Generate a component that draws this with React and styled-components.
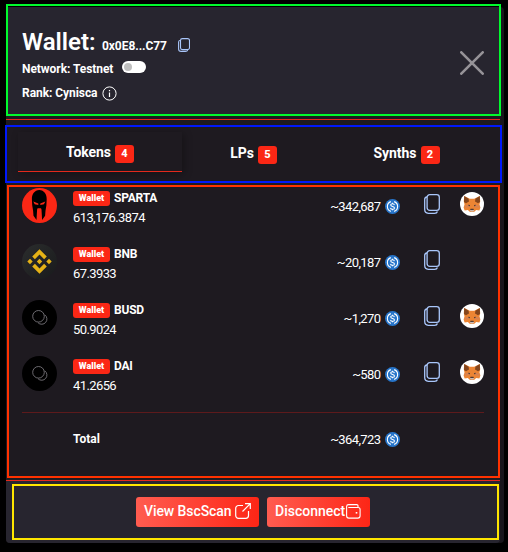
import React from 'react';
import styled, { createGlobalStyle } from 'styled-components';

const GlobalStyle = createGlobalStyle`
  body { margin: 0; background: #000; font-family: Roboto, sans-serif; color: #fff; }
  * { box-sizing: border-box; }
`;

const Page = styled.main`
  width: 508px;
  height: 552px;
  padding: 7px 4px 9px 6px;
  overflow: hidden;
`;

const Dialog = styled.div`
  display: flex;
  flex-direction: column;
  height: 536px;
  padding-right: 4px;
  background: #18151b;
  border-radius: 4px;
`;

const Outline = styled.div`
  position: absolute;
  inset: ${(p) => p.$inset};
  border: 2px solid ${(p) => p.$color};
  pointer-events: none;
`;

const Header = styled.header`
  position: relative;
  display: flex;
  justify-content: space-between;
  height: 113px;
  padding: 20px 16px 0;
  background: #27252f;
  border-bottom: 1px solid #e3291c;
  box-shadow: inset 0 -3px 0 #1e1a20;
`;

const TitleRow = styled.div`
  display: flex;
  align-items: flex-start;
  height: 30px;
  line-height: 30px;
  svg { margin-top: 11px; }
`;

const Title = styled.h1`
  margin: 0;
  width: 80px;
  font-size: 24px;
  font-weight: 600;
  line-height: 30px;
`;

const Address = styled.span`
  width: 76px;
  padding-top: 4px;
  font-size: 12px;
  font-weight: 700;
  letter-spacing: -0.06px;
`;

const InfoRow = styled.div`
  display: flex;
  align-items: center;
  gap: ${(p) => p.$gap};
  height: 24px;
  font-size: 12px;
  font-weight: 700;
  letter-spacing: -0.06px;
  white-space: nowrap;
`;

const Switch = styled.span`
  display: flex;
  align-items: center;
  width: 24px;
  height: 12px;
  margin-bottom: 4px;
  padding-left: 2px;
  border-radius: 6px;
  background: #fff;
`;

const Knob = styled.span`
  width: 8px;
  height: 8px;
  border-radius: 50%;
  background: #bfbfbf;
`;

const CloseButton = styled.button`
  width: 24px;
  height: 24px;
  margin-top: 24px;
  padding: 0;
  border: 0;
  background: none;
  svg { display: block; }
`;

const TabBar = styled.nav`
  position: relative;
  display: flex;
  height: 65px;
  padding: 12px 12px 0;
  background: #1e1a20;
`;

const Tab = styled.button`
  display: flex;
  align-items: flex-start;
  justify-content: center;
  gap: 4px;
  width: ${(p) => p.$width};
  height: 40px;
  padding: ${(p) => (p.$active ? '13px' : '14px')} 0 0;
  border: 0;
  border-bottom: 1px solid ${(p) => (p.$active ? '#e3291c' : 'transparent')};
  background: none;
  box-shadow: ${(p) => (p.$active ? '2px 2px 8px rgba(0, 0, 0, 0.3)' : 'none')};
  color: #fff;
  font: 700 14px/15px Roboto, sans-serif;
  letter-spacing: -0.05px;
`;

const Count = styled.span`
  width: 19px;
  height: 18px;
  border-radius: 3px;
  background: #fb2715;
  font-size: 11px;
  font-weight: 800;
  line-height: 17px;
  text-align: center;
`;

const Body = styled.section`
  position: relative;
  height: 295px;
  padding: 3px 16px 0;
  background: #1e1a20;
`;

const AssetRow = styled.div`
  display: grid;
  grid-template-columns: 35px 1fr 100px 40px 44px;
  height: 56px;
`;

const Avatar = styled.svg`
  display: block;
  width: 35px;
  height: 35px;
`;

const AssetText = styled.div`
  padding: 3px 0 0 16px;
  font-size: 13px;
  letter-spacing: -0.6px;
`;

const AssetName = styled.div`
  display: flex;
  gap: 4px;
  height: 15px;
  font-size: 12px;
  font-weight: 700;
  line-height: 14px;
  letter-spacing: -0.2px;
`;

const WalletTag = styled.span`
  width: 37px;
  height: 15px;
  border-radius: 3px;
  background: #fb2715;
  font-size: 9px;
  font-weight: 900;
  line-height: 15px;
  text-align: center;
  letter-spacing: 0;
`;

const Amount = styled.div`
  margin-top: 3px;
  line-height: 17px;
`;

const Value = styled.div`
  display: flex;
  align-items: center;
  justify-content: flex-end;
  gap: 4.6px;
  height: 15px;
  margin-top: ${(p) => p.$top};
  font-size: 13px;
  letter-spacing: -0.62px;
`;

const CopySlot = styled.div`
  padding: 6px 0 0 24px;
`;

const FoxSlot = styled.div`
  padding: 4px 0 0 20px;
`;

const Divider = styled.hr`
  height: 1px;
  margin: 0 0 18px;
  border: 0;
  background: #5d1a1c;
`;

const TotalRow = styled.div`
  display: grid;
  grid-template-columns: 51px 1fr 100px 84px;
  font-size: 12px;
  font-weight: 700;
  line-height: 17px;
  letter-spacing: 0;
`;

const TotalValue = styled(Value)`
  font-weight: 400;
`;

const Footer = styled.footer`
  position: relative;
  display: flex;
  justify-content: center;
  gap: 8px;
  height: 63px;
  padding-top: 16px;
  border-top: 1px solid #e3291c;
  border-radius: 0 0 4px 4px;
  background: #27252f;
`;

const Button = styled.button`
  display: flex;
  align-items: center;
  gap: ${(p) => p.$gap};
  width: ${(p) => p.$width};
  height: 30px;
  padding: 0 0 2px 8px;
  border: 0;
  border-radius: 3px;
  background: linear-gradient(90deg, #ff5c50, #fd2616);
  color: #fff;
  font: 500 14px Roboto, sans-serif;
  letter-spacing: ${(p) => p.$tracking};
  white-space: nowrap;
  svg { flex: none; }
`;

const CopyIcon = () => (
  <svg width="16" height="20" viewBox="0 0 16 20" fill="none" stroke="#a9c6fa" strokeWidth="1.3">
    <rect x="3.1" y="0.7" width="12.2" height="15.6" rx="2.6" />
    <path d="M3 3C1.4 3.2.7 4 .7 5.4v10.2c0 2.4 1.2 3.7 3.6 3.7h6.2c1.6 0 2.6-.6 2.9-1.8" />
  </svg>
);

const SmallCopyIcon = () => (
  <svg width="12" height="14" viewBox="0 0 12 14" fill="none" stroke="#a9c6fa" strokeWidth="1.1">
    <rect x="2.5" y="0.6" width="9" height="11" rx="1.9" />
    <path d="M2.5 2.2C1.2 2.3.6 2.9.6 4v6.9c0 1.7.9 2.5 2.5 2.5h4.4c1.2 0 1.9-.4 2.2-1.3" />
  </svg>
);

const UsdIcon = () => (
  <svg width="15" height="15" viewBox="0 0 32 32">
    <circle cx="16" cy="16" r="16" fill="#2775ca" />
    <g fill="none" stroke="#fff" strokeWidth="2.3">
      <path d="M12.5 5.6a11 11 0 0 0 0 20.8M19.5 5.6a11 11 0 0 1 0 20.8" />
      <path d="M20 13c-.3-2-1.7-2.8-4-2.8-2.3 0-3.8 1-3.8 2.8 0 4 8 1.9 8 6 0 1.9-1.7 3-4.2 3-2.5 0-4-1-4.2-3M16 7.8v2.5M16 21.7v2.5" />
    </g>
  </svg>
);

const FoxIcon = () => (
  <svg width="24" height="24" viewBox="0 0 24 24">
    <circle cx="12" cy="12" r="12" fill="#fff" />
    <path fill="#ec8534" d="M4.2 4 9.8 6.8h4.4L19.800 4l.4 5.200-.7 3.200.9 3.100-1 3.100-3.200-.6-2.200 2h-4l-2.200-2-3.200.6-1-3.100.9-3.100-.7-3.200z" />
    <path fill="#84451c" d="M4.200 4 8.600 6.800 9 9.600l-3 1.600-2-1.200zM19.800 4l-4.400 2.800-.4 2.800 3 1.600 2-1.200z" />
    <path fill="#d9824f" d="m4.800 13.500 4-.9 1 2.600-5.500.6zM19.200 13.500l-4-.9-1 2.600 5.500.6z" />
    <path fill="#4a3a36" d="m8.200 12.800 1.700.3v1.100l-1.200-.3zM15.800 12.800l-1.700.3v1.100l1.200-.3zM10.500 16.800h3l.3 1.300h-3.600z" />
    <path fill="#cdbbb0" d="M9.900 18.100h4.200l-.5 1.500h-3.200z" />
  </svg>
);

const SpartaAvatar = () => (
  <Avatar viewBox="0 0 35 35">
    <circle cx="17.5" cy="17.5" r="17.5" fill="#fb2715" />
    <path d="M17.3 2c4.8.2 7.4 4 7.4 9.2l-.3 6-.9 5.5-.4 5-3 4.3-.6-10.400-.5-1.400h-3.400l-.5 1.400-.6 10.400-3-4.300-.4-5-.9-5.500-.3-6C9.900 6 12.500 2.200 17.300 2z" />
    <path fill="#fb2715" d="m11.300 13.400 5 2.200v1.300l-3.600-.7zM23.300 13.400l-5 2.200v1.300l3.600-.7z" />
  </Avatar>
);

const BnbAvatar = () => (
  <Avatar viewBox="0 0 35 35">
    <defs>
      <linearGradient id="bnb" x1="0" y1="0" x2="1" y2="1">
        <stop stopColor="#2b2d2d" />
        <stop offset="1" stopColor="#191a1c" />
      </linearGradient>
    </defs>
    <circle cx="17.5" cy="17.5" r="17.5" fill="url(#bnb)" />
    <path fill="#e5b216" d="m17.5 5.200 7.300 7.300-2.700 2.700-4.600-4.600-4.600 4.600-2.700-2.700zM17.500 29.800l7.300-7.300-2.700-2.700-4.600 4.600-4.600-4.600-2.700 2.700zM17.500 14.800l2.700 2.700-2.700 2.700-2.700-2.700zM8 14.800l2.700 2.700L8 20.200l-2.700-2.700zM27 14.800l2.700 2.700-2.700 2.700-2.700-2.700z" />
  </Avatar>
);

const CoinAvatar = () => (
  <Avatar viewBox="0 0 35 35">
    <circle cx="17.5" cy="17.5" r="17.5" fill="#000" />
    <g fill="none" stroke="#77757b" strokeWidth="0.9">
      <circle cx="16.5" cy="16.3" r="5.8" />
      <path d="M22.700 14.800a5.200 5.200 0 1 1-6.700 7.900" />
    </g>
  </Avatar>
);

const avatars = { SPARTA: SpartaAvatar, BNB: BnbAvatar };

const assets = [
  { name: 'SPARTA', amount: '613,176.3874', value: '~342,687', metamask: true },
  { name: 'BNB', amount: '67.3933', value: '~20,187', metamask: false },
  { name: 'BUSD', amount: '50.9024', value: '~1,270', metamask: true },
  { name: 'DAI', amount: '41.2656', value: '~580', metamask: true },
];

const Asset = ({ asset }) => {
  const Picture = avatars[asset.name] || CoinAvatar;
  return (
    <AssetRow>
      <Picture />
      <AssetText>
        <AssetName><WalletTag>Wallet</WalletTag>{asset.name}</AssetName>
        <Amount>{asset.amount}</Amount>
      </AssetText>
      <Value $top="11px">{asset.value}<UsdIcon /></Value>
      <CopySlot><CopyIcon /></CopySlot>
      <FoxSlot>{asset.metamask && <FoxIcon />}</FoxSlot>
    </AssetRow>
  );
};

export default function App() {
  return (
    <>
      <GlobalStyle />
      <Page>
        <Dialog>
          <Header>
            <div>
              <TitleRow>
                <Title>Wallet:</Title>
                <Address>0x0E8...C77</Address>
                <SmallCopyIcon />
              </TitleRow>
              <InfoRow $gap="9px">Network: Testnet<Switch><Knob /></Switch></InfoRow>
              <InfoRow $gap="5px">
                Rank: Cynisca
                <svg width="15" height="15" viewBox="0 0 15 15" fill="none" stroke="#fff">
                  <circle cx="7.5" cy="7.5" r="6.6" />
                  <path d="M7.5 6.5v4.5M7.5 4v1.2" strokeWidth="1.2" />
                </svg>
              </InfoRow>
            </div>
            <CloseButton aria-label="Close">
              <svg width="24" height="24" viewBox="0 0 24 24" stroke="#969398" strokeWidth="2.6" strokeLinecap="round">
                <path d="m1.3 1.3 21.4 21.4M22.7 1.3 1.3 22.7" />
              </svg>
            </CloseButton>
            <Outline $inset="-3px -1px 3px 0" $color="#00fb2d" />
          </Header>
          <TabBar>
            <Tab $active $width="164px">Tokens<Count>4</Count></Tab>
            <Tab $width="143px">LPs<Count>5</Count></Tab>
            <Tab $width="163px">Synths<Count>2</Count></Tab>
            <Outline $inset="5px -2px 2px -1px" $color="#0019fb" />
          </TabBar>
          <Body>
            {assets.map((asset) => <Asset key={asset.name} asset={asset} />)}
            <Divider />
            <TotalRow>
              <span />
              <span>Total</span>
              <TotalValue $top="1px">~364,723<UsdIcon /></TotalValue>
            </TotalRow>
            <Outline $inset="0 0 2px 1px" $color="#ff3200" />
          </Body>
          <Footer>
            <Button $width="123px" $gap="3.5px" $tracking="-0.08px">
              View BscScan
              <svg width="16" height="16" viewBox="0 0 16 16" fill="none" stroke="#fff" strokeWidth="1.2">
                <path d="M8 2.5H3.5a2.800 2.800 0 0 0-2.800 2.800v7.200a2.800 2.800 0 0 0 2.800 2.800h7.200a2.800 2.800 0 0 0 2.800-2.800V8M10 .7h5.300V6M15.300.7 7.500 8.500" />
              </svg>
            </Button>
            <Button $width="103px" $gap="1px" $tracking="0">
              Disconnect
              <svg width="15" height="15" viewBox="0 0 15 15" fill="none" stroke="#fff" strokeWidth="1.1">
                <path d="M12 3.5V1.800c0-.8-.5-1.200-1.200-1.200H2.600A2 2 0 0 0 .6 2.500v9.300c0 1.500.8 2.300 2.300 2.300h8.900c1.500 0 2.300-.8 2.300-2.300V5.500c0-1.300-.7-2-2-2H2.300" />
                <rect x="9.7" y="8" width="1.6" height="1.6" fill="#fff" stroke="none" />
              </svg>
            </Button>
            <Outline $inset="3px 1px 3px 6px" $color="#ffe600" />
          </Footer>
        </Dialog>
      </Page>
    </>
  );
}
